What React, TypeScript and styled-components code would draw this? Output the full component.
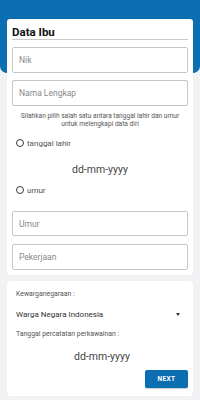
import React from 'react';
import styled, { createGlobalStyle } from 'styled-components';

const GlobalStyle = createGlobalStyle`
  html, body {
    margin: 0;
    padding: 0;
    background: #f2f1f4;
    font-family: Roboto, "Liberation Sans", sans-serif;
  }
`;

const Page = styled.div`
  position: relative;
  width: 200px;
  height: 400px;
  padding: 19px 7px 0;
  box-sizing: border-box;
  overflow: hidden;

  &::before {
    content: '';
    position: absolute;
    left: 0;
    top: 0;
    width: 200px;
    height: 73px;
    background: #0b6eb0;
    border-radius: 0 0 7px 7px;
  }
`;

const Card = styled.div`
  position: relative;
  background: #ffffff;
  border-radius: 3px;
  box-shadow: 0 0 1px rgba(0, 0, 0, 0.08);
`;

const FormCard = styled(Card)`
  padding: 6px 5px 5px;
`;

const Title = styled.h3`
  margin: 0;
  font-size: 11.5px;
  line-height: 14px;
  font-weight: 700;
  color: #111;
  border-bottom: 1px solid #c9c9c9;
`;

const Field = styled.div<{ $top: number; $height?: number }>`
  margin-top: ${p => p.$top}px;
  height: ${p => p.$height ?? 26}px;
  border: 1px solid #c6c6c6;
  border-radius: 2px;
  box-sizing: border-box;
  display: flex;
  align-items: center;
  padding-left: 6px;
  font-size: 8.5px;
  color: #8a8a8a;
`;

const Hint = styled.p`
  margin: 6px 0 0;
  font-size: 6.6px;
  line-height: 8px;
  text-align: center;
  color: #555;
`;

const RadioRow = styled.label<{ $top: number }>`
  margin-top: ${p => p.$top}px;
  height: 10px;
  display: flex;
  align-items: center;
  gap: 3px;
  padding-left: 4px;
  font-size: 8px;
  color: #555;
`;

const Circle = styled.span`
  width: 8px;
  height: 8px;
  border: 1px solid #3a3a3a;
  border-radius: 50%;
  box-sizing: border-box;
`;

const DateText = styled.div<{ $top: number }>`
  margin-top: ${p => p.$top}px;
  height: 10px;
  line-height: 10px;
  text-align: center;
  font-size: 10.5px;
  color: #444;
`;

const InfoCard = styled(Card)`
  margin-top: 6px;
  padding: 8px 5px 8px 9px;
  display: flex;
  flex-direction: column;
`;

const SmallLabel = styled.div<{ $top?: number }>`
  margin-top: ${p => p.$top ?? 0}px;
  font-size: 6.9px;
  line-height: 10px;
  color: #555;
`;

const Select = styled.div`
  margin-top: 10px;
  height: 10px;
  display: flex;
  align-items: center;
  justify-content: space-between;
  padding-right: 8px;
  font-size: 8px;
  color: #333;
`;

const Caret = styled.span`
  width: 0;
  height: 0;
  border-left: 2.5px solid transparent;
  border-right: 2.5px solid transparent;
  border-top: 3px solid #333;
`;

const Footer = styled.div`
  margin-top: 8px;
  display: flex;
  justify-content: flex-end;
`;

const NextButton = styled.button`
  width: 43px;
  height: 18px;
  border: none;
  border-radius: 2px;
  background: #0b6eb0;
  color: #fff;
  font-family: Roboto, "Liberation Sans", sans-serif;
  font-weight: 700;
  font-size: 6.5px;
  letter-spacing: 0.4px;
  padding: 0;
  box-shadow: 0 1px 1px rgba(0, 0, 0, 0.2);
`;

export default function App() {
  return (
    <>
      <GlobalStyle />
      <Page>
        <FormCard>
          <Title>Data Ibu</Title>
          <Field $top={7}>Nik</Field>
          <Field $top={7}>Nama Lengkap</Field>
          <Hint>
            Silahkan pilih salah satu antara tanggal lahir dan umur
            <br />
            untuk melengkapi data diri
          </Hint>
          <RadioRow $top={10}>
            <Circle />
            tanggal lahir
          </RadioRow>
          <DateText $top={17}>dd-mm-yyyy</DateText>
          <RadioRow $top={10}>
            <Circle />
            umur
          </RadioRow>
          <Field $top={16} $height={25}>Umur</Field>
          <Field $top={8}>Pekerjaan</Field>
        </FormCard>
        <InfoCard>
          <SmallLabel>Kewarganegaraan :</SmallLabel>
          <Select>
            Warga Negara Indonesia
            <Caret />
          </Select>
          <SmallLabel $top={10}>Tanggal percatatan perkawainan :</SmallLabel>
          <DateText $top={13}>dd-mm-yyyy</DateText>
          <Footer>
            <NextButton>NEXT</NextButton>
          </Footer>
        </InfoCard>
      </Page>
    </>
  );
}
